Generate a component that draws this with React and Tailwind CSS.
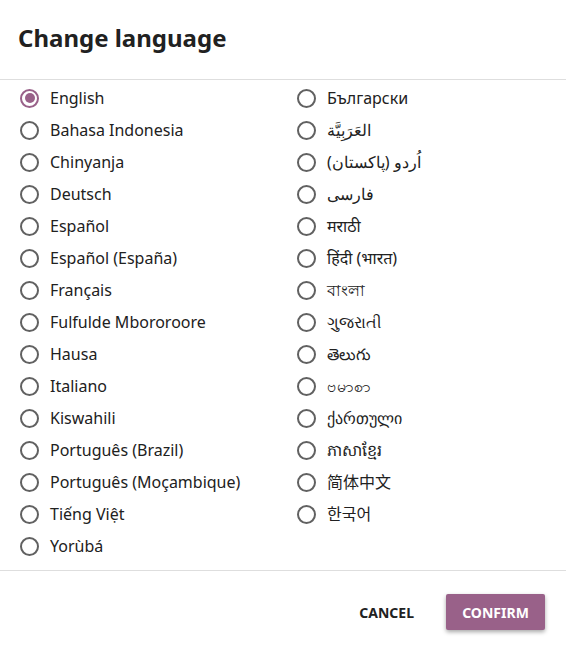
const LEFT = [
  'English',
  'Bahasa Indonesia',
  'Chinyanja',
  'Deutsch',
  'Español',
  'Español (España)',
  'Français',
  'Fulfulde Mbororoore',
  'Hausa',
  'Italiano',
  'Kiswahili',
  'Português (Brazil)',
  'Português (Moçambique)',
  'Tiếng Việt',
  'Yorùbá',
];

const RIGHT = [
  'Български',
  'العَرَبِيَّة',
  'اُردو (پاکستان)',
  'فارسی',
  'मराठी',
  'हिंदी (भारत)',
  'বাংলা',
  'ગુજરાતી',
  'తెలుగు',
  'ဗမာစာ',
  'ქართული',
  'ភាសាខ្មែរ',
  '简体中文',
  '한국어',
];

function Radio({ checked }) {
  return (
    <span
      className={`w-[19px] h-[19px] rounded-full border-2 flex items-center justify-center shrink-0 ${
        checked ? 'border-[#996189]' : 'border-[#616161]'
      }`}
    >
      {checked && <span className="w-[10px] h-[10px] rounded-full bg-[#996189]" />}
    </span>
  );
}

function Option({ label, checked }) {
  return (
    <div className="h-[32px] flex items-center gap-[11px]">
      <Radio checked={checked} />
      <span className="text-[16px] text-[#212121] whitespace-nowrap">{label}</span>
    </div>
  );
}

export default function App() {
  return (
    <div
      className="w-[566px] h-[651px] bg-white flex flex-col"
      style={{ fontFamily: '"Noto Sans", "Noto Sans CJK SC", sans-serif' }}
    >
      <div className="px-[18px] pt-[22px] pb-[25px] border-b border-[#dedede]">
        <h1 className="text-[24px] leading-[32px] font-bold text-[#212121]">Change language</h1>
      </div>
      <div className="pl-[20px] pt-[2px] pb-[8px] grid grid-cols-[277px_1fr] border-b border-[#dedede]">
        <div className="flex flex-col">
          {LEFT.map((l, i) => (
            <Option key={l} label={l} checked={i === 0} />
          ))}
        </div>
        <div className="flex flex-col">
          {RIGHT.map((l) => (
            <Option key={l} label={l} />
          ))}
        </div>
      </div>
      <div className="flex justify-end items-center gap-[16px] pt-[23px] pr-[21px]">
        <button className="h-[36px] px-[16px] text-[14px] font-bold text-[#212121] uppercase">Cancel</button>
        <button className="h-[36px] w-[99px] rounded-[2px] bg-[#996189] text-white text-[14px] font-bold uppercase shadow-[0_2px_4px_rgba(0,0,0,0.35)]">
          Confirm
        </button>
      </div>
    </div>
  );
}
